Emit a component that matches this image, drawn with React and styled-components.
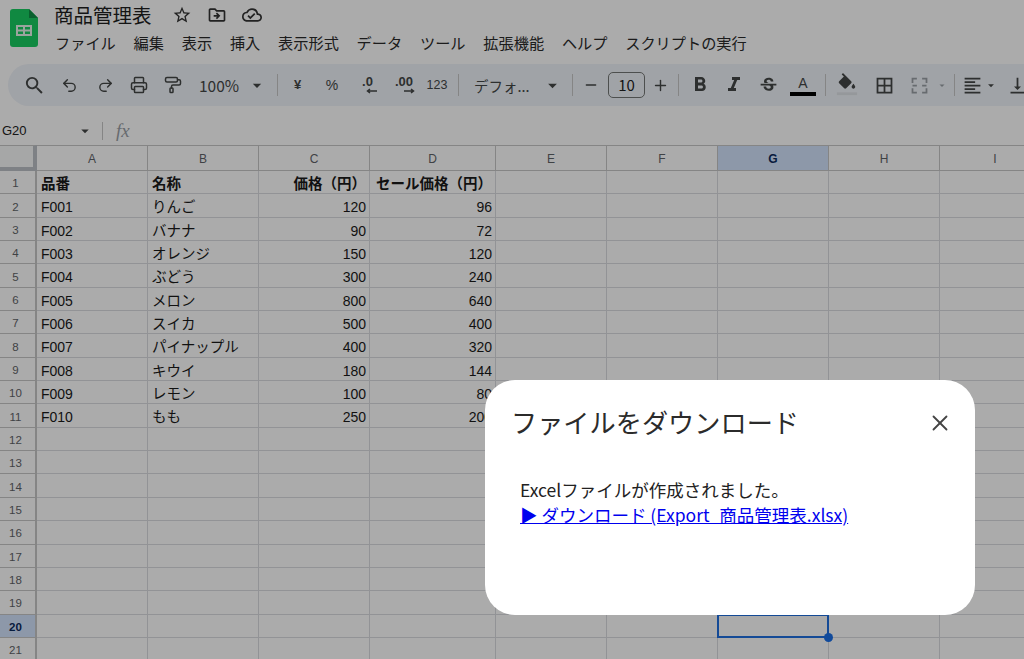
import React from 'react';
import styled, { createGlobalStyle } from 'styled-components';
import { Undo2, Redo2, Printer, PaintRoller, Minus, Plus, X } from 'lucide-react';
import {
  MdSearch,
  MdStarBorder,
  MdOutlineDriveFileMove,
  MdOutlineCloudDone,
  MdArrowDropDown,
  MdFormatBold,
  MdFormatItalic,
  MdStrikethroughS,
  MdBorderAll,
  MdFormatAlignLeft,
  MdVerticalAlignBottom,
} from 'react-icons/md';

const UI_FONT = `'Noto Sans CJK JP', 'Noto Sans', sans-serif`;
const CELL_FONT = `'Liberation Sans', 'Noto Sans CJK JP', sans-serif`;

const GlobalStyle = createGlobalStyle`
  html, body {
    margin: 0;
    padding: 0;
    background: #fff;
  }
  * {
    box-sizing: border-box;
  }
`;

const Page = styled.div`
  position: relative;
  width: 1024px;
  height: 659px;
  overflow: hidden;
  background: #fff;
  color: #1f1f1f;
  font-family: ${UI_FONT};
`;

const Top = styled.header`
  display: flex;
  height: 64px;
  padding: 9px 0 0 10px;
  gap: 17px;
`;

const TitleBlock = styled.div`
  display: flex;
  flex-direction: column;
`;

const TitleRow = styled.div`
  display: flex;
  align-items: center;
  height: 14px;
  margin: -1px 0 0 -1px;
`;

const DocTitle = styled.div`
  font-size: 19.5px;
  line-height: 14px;
  width: 110px;
`;

const TitleIcon = styled.span`
  display: flex;
  justify-content: center;
  width: 35px;
  color: #333;
  font-size: 20px;
`;

const Menu = styled.nav`
  display: flex;
  gap: 17.8px;
  margin-top: 10px;
  font-size: 15.2px;
  line-height: 20px;
  color: #2a2a2a;
`;

const Toolbar = styled.div`
  display: flex;
  align-items: center;
  height: 42px;
  margin: 0 -20px 0 8px;
  padding-left: 9px;
  background: #eff3f9;
  border-radius: 21px;
  color: #444746;
`;

const ToolButton = styled.span`
  display: flex;
  flex: none;
  align-items: center;
  justify-content: center;
  width: ${({ $w }) => $w || 34}px;
  height: 30px;
  color: ${({ $faded }) => ($faded ? '#9aa0a6' : 'inherit')};
  font-size: 21px;
`;

const ToolSep = styled.span`
  flex: none;
  width: 1px;
  height: 22px;
  margin: 0 ${({ $r }) => $r}px 0 ${({ $l }) => $l}px;
  background: #c7c7c7;
`;

const ZoomText = styled.span`
  flex: none;
  width: 58px;
  padding-left: 10px;
  font-size: 15.5px;
`;

const FontName = styled.span`
  flex: none;
  width: 70px;
  padding-left: 6px;
  font-size: 14.5px;
  white-space: nowrap;
`;

const FormatText = styled.span`
  display: flex;
  flex: none;
  flex-direction: column;
  align-items: center;
  justify-content: center;
  width: ${({ $w }) => $w || 35}px;
  font-family: ${CELL_FONT};
  font-size: ${({ $size }) => $size || 13}px;
  font-weight: ${({ $bold }) => ($bold ? 700 : 400)};
  line-height: 12px;
`;

const FormatArrow = styled.svg`
  margin-left: 9px;
`;

const SizeBox = styled.span`
  flex: none;
  width: 37px;
  height: 26px;
  margin-left: 6px;
  border: 1px solid #747775;
  border-radius: 5px;
  font-size: 15px;
  line-height: 24px;
  text-align: center;
  color: #222;
`;

const TextColor = styled.span`
  display: flex;
  flex: none;
  flex-direction: column;
  align-items: center;
  width: 34px;
  font-family: ${CELL_FONT};
  font-size: 14px;
  line-height: 16px;
  &::after {
    content: '';
    width: 26px;
    height: 4px;
    margin-top: 1px;
    background: #000;
  }
`;

const FormulaBar = styled.div`
  display: flex;
  align-items: center;
  height: 39px;
  padding: 10px 0 0 2px;
  color: #444746;
`;

const CellName = styled.span`
  width: 74px;
  font-family: ${CELL_FONT};
  font-size: 13px;
  color: #222;
`;

const FormulaSep = styled.span`
  width: 1px;
  height: 18px;
  margin: 0 13px 0 8px;
  background: #c7c7c7;
`;

const Fx = styled.span`
  font-family: 'Liberation Serif', serif;
  font-size: 19px;
  font-style: italic;
  color: #9aa0a6;
`;

const Sheet = styled.div`
  display: grid;
  grid-template-columns: 37px 111px 111px 111px 126px 111px 111px 111px 111px 111px;
  grid-auto-rows: 23.35px;
  grid-template-rows: 26px;
  width: 1050px;
  font-family: ${CELL_FONT};
`;

const Corner = styled.div`
  background: #f8f9fa;
  border-top: 1px solid #c7c7c7;
  border-right: 4px solid #bdc1c6;
  border-bottom: 4px solid #bdc1c6;
`;

const ColHead = styled.div`
  display: flex;
  align-items: center;
  justify-content: center;
  padding-top: 1px;
  background: ${({ $active }) => ($active ? '#d3e3fd' : '#fff')};
  border-top: 1px solid #c7c7c7;
  border-right: 1px solid #c7c7c7;
  border-bottom: 1px solid #c7c7c7;
  color: ${({ $active }) => ($active ? '#0b2a5c' : '#5f6368')};
  font-size: 12px;
  font-weight: ${({ $active }) => ($active ? 700 : 400)};
`;

const RowHead = styled.div`
  display: flex;
  align-items: center;
  justify-content: center;
  padding: 2px 4px 0 0;
  background: ${({ $active }) => ($active ? '#d3e3fd' : '#fff')};
  border-right: 2px solid #c7c7c7;
  border-bottom: 1px solid #c7c7c7;
  color: ${({ $active }) => ($active ? '#0b2a5c' : '#5f6368')};
  font-size: 11.5px;
  font-weight: ${({ $active }) => ($active ? 700 : 400)};
`;

const Cell = styled.div`
  padding: 1px 3px 0 4px;
  overflow: hidden;
  border-right: 1px solid #dadce0;
  border-bottom: 1px solid #dadce0;
  color: #1a1a1a;
  font-size: ${({ $jp }) => ($jp ? 14.5 : 14)}px;
  font-weight: ${({ $bold }) => ($bold ? 700 : 400)};
  line-height: 24px;
  text-align: ${({ $right }) => ($right ? 'right' : 'left')};
  white-space: nowrap;
`;

const SelectedCell = styled.div`
  position: relative;
  margin: -1px 0 0 -1px;
  border: 2px solid #1f6fe0;
`;

const SelectionHandle = styled.span`
  position: absolute;
  right: -6px;
  bottom: -6px;
  width: 9px;
  height: 9px;
  border-radius: 50%;
  background: #1a6fe8;
`;

const Overlay = styled.div`
  position: absolute;
  inset: 0;
  display: flex;
  align-items: flex-end;
  justify-content: flex-end;
  padding: 0 49px 44px 0;
  background: rgba(0, 0, 0, 0.33);
`;

const Dialog = styled.div`
  display: flex;
  flex-direction: column;
  width: 490px;
  height: 235px;
  padding: 24px 22px 0 27px;
  background: #fff;
  border-radius: 30px;
`;

const DialogHead = styled.div`
  display: flex;
  align-items: center;
  justify-content: space-between;
  height: 36px;
`;

const DialogTitle = styled.h2`
  margin: 0 0 0 -1px;
  font-size: 26.2px;
  font-weight: 400;
  line-height: 36px;
  color: #2b2b2b;
`;

const CloseButton = styled.button`
  display: flex;
  padding: 2px 0 0;
  border: 0;
  background: none;
  color: #444;
`;

const DialogBody = styled.div`
  margin-top: 37px;
  padding-left: 8px;
  font-size: 17.5px;
  line-height: 25px;
  color: #222;
`;

const DownloadLink = styled.a`
  color: #0000ee;
  text-decoration: underline;
`;

const LogoIcon = () => (
  <svg width="28" height="38" viewBox="0 0 28 38" style={{ flex: 'none' }}>
    <path d="M3 0h16l9 9v26a3 3 0 0 1-3 3H3a3 3 0 0 1-3-3V3a3 3 0 0 1 3-3z" fill="#18cc62" />
    <path d="M19 0l9 9h-9z" fill="#0e8f45" />
    <path d="M6 16h16v11H6zM8 18v2.5h5V18zm7 0v2.5h5V18zM8 22.5V25h5v-2.5zm7 0V25h5v-2.5z" fill="#e8f5ec" fillRule="evenodd" />
  </svg>
);

const MergeIcon = () => (
  <svg width="21" height="21" viewBox="0 0 24 24" fill="none" stroke="currentColor" strokeWidth="2">
    <path d="M4 9V4h5M15 4h5v5M4 15v5h5M15 20h5v-5M4 12h5M15 12h5" />
  </svg>
);

const FillIcon = () => (
  <svg width="22" height="24" viewBox="0 0 24 26">
    <path
      d="M16.56 8.94 7.62 0 6.21 1.41l2.38 2.38-5.15 5.15c-.59.59-.59 1.54 0 2.12l5.5 5.5c.29.29.68.44 1.06.44s.77-.15 1.06-.44l5.5-5.5c.59-.58.59-1.53 0-2.11zM19 11.5s-2 2.17-2 3.5c0 1.1.9 2 2 2s2-.9 2-2c0-1.33-2-3.5-2-3.5z"
      fill="currentColor"
    />
    <path d="M1 21h22v3H1z" fill="#dfe3e8" />
  </svg>
);

const ArrowLine = ({ right }) => (
  <FormatArrow width="12" height="6" viewBox="0 0 12 6" fill="none" stroke="currentColor" strokeWidth="1.5">
    {right ? <path d="M1 3h9M8 1l2.500 2L8 5" /> : <path d="M11 3H2M4 1 1.500 3 4 5" />}
  </FormatArrow>
);

const MENU = ['ファイル', '編集', '表示', '挿入', '表示形式', 'データ', 'ツール', '拡張機能', 'ヘルプ', 'スクリプトの実行'];
const COLS = ['A', 'B', 'C', 'D', 'E', 'F', 'G', 'H', 'I'];

const ROWS = [
  ['品番', '名称', '価格（円）', 'セール価格（円）'],
  ['F001', 'りんご', 120, 96],
  ['F002', 'バナナ', 90, 72],
  ['F003', 'オレンジ', 150, 120],
  ['F004', 'ぶどう', 300, 240],
  ['F005', 'メロン', 800, 640],
  ['F006', 'スイカ', 500, 400],
  ['F007', 'パイナップル', 400, 320],
  ['F008', 'キウイ', 180, 144],
  ['F009', 'レモン', 100, 80],
  ['F010', 'もも', 250, 200],
];

const ACTIVE_COL = 6;
const ACTIVE_ROW = 20;

function SheetGrid() {
  const cells = [<Corner key="corner" />];
  COLS.forEach((c, i) => {
    cells.push(<ColHead key={c} $active={i === ACTIVE_COL}>{c}</ColHead>);
  });

  for (let r = 1; r <= 21; r++) {
    cells.push(<RowHead key={`r${r}`} $active={r === ACTIVE_ROW}>{r}</RowHead>);
    const row = ROWS[r - 1] || [];
    COLS.forEach((c, i) => {
      if (r === ACTIVE_ROW && i === ACTIVE_COL) {
        cells.push(
          <SelectedCell key={`${c}${r}`}>
            <SelectionHandle />
          </SelectedCell>
        );
        return;
      }
      cells.push(
        <Cell key={`${c}${r}`} $bold={r === 1} $jp={r === 1 || i === 1} $right={i === 2 || i === 3}>
          {row[i]}
        </Cell>
      );
    });
  }
  return <Sheet>{cells}</Sheet>;
}

export default function App() {
  return (
    <Page>
      <GlobalStyle />
      <Top>
        <LogoIcon />
        <TitleBlock>
          <TitleRow>
            <DocTitle>商品管理表</DocTitle>
            <TitleIcon><MdStarBorder /></TitleIcon>
            <TitleIcon><MdOutlineDriveFileMove /></TitleIcon>
            <TitleIcon><MdOutlineCloudDone /></TitleIcon>
          </TitleRow>
          <Menu>
            {MENU.map(m => <span key={m}>{m}</span>)}
          </Menu>
        </TitleBlock>
      </Top>

      <Toolbar>
        <ToolButton><MdSearch size={23} /></ToolButton>
        <ToolButton $w={37}><Undo2 size={17} /></ToolButton>
        <ToolButton><Redo2 size={17} /></ToolButton>
        <ToolButton><Printer size={18} /></ToolButton>
        <ToolButton $w={33}><PaintRoller size={18} /></ToolButton>
        <ZoomText>100%</ZoomText>
        <ToolButton $w={20}><MdArrowDropDown /></ToolButton>
        <ToolSep $l={10} $r={2} />
        <FormatText $w={35} $bold>¥</FormatText>
        <FormatText $w={34} $size={14}>%</FormatText>
        <FormatText $w={37} $bold>.0<ArrowLine /></FormatText>
        <FormatText $w={36} $bold>.00<ArrowLine right /></FormatText>
        <FormatText $w={30} $size={12.5}>123</FormatText>
        <ToolSep $l={6} $r={9} />
        <FontName>デフォ...</FontName>
        <ToolButton $w={28}><MdArrowDropDown /></ToolButton>
        <ToolSep $l={6} $r={7} />
        <ToolButton $w={22}><Minus size={16} /></ToolButton>
        <SizeBox>10</SizeBox>
        <ToolButton $w={30}><Plus size={17} /></ToolButton>
        <ToolSep $l={3} $r={3} />
        <ToolButton $w={35}><MdFormatBold size={24} /></ToolButton>
        <ToolButton><MdFormatItalic size={24} /></ToolButton>
        <ToolButton $w={35}><MdStrikethroughS size={21} /></ToolButton>
        <TextColor>A</TextColor>
        <ToolSep $l={5} $r={2} />
        <ToolButton $w={38}><FillIcon /></ToolButton>
        <ToolButton $w={36}><MdBorderAll size={21} /></ToolButton>
        <ToolButton $faded><MergeIcon /></ToolButton>
        <ToolButton $w={12} $faded><MdArrowDropDown /></ToolButton>
        <ToolSep $l={6} $r={5} />
        <ToolButton $w={24}><MdFormatAlignLeft size={21} /></ToolButton>
        <ToolButton $w={14}><MdArrowDropDown /></ToolButton>
        <ToolButton $w={38}><MdVerticalAlignBottom size={21} /></ToolButton>
      </Toolbar>

      <FormulaBar>
        <CellName>G20</CellName>
        <MdArrowDropDown size={18} />
        <FormulaSep />
        <Fx>fx</Fx>
      </FormulaBar>

      <SheetGrid />

      <Overlay>
        <Dialog>
          <DialogHead>
            <DialogTitle>ファイルをダウンロード</DialogTitle>
            <CloseButton type="button"><X size={26} strokeWidth={1.7} /></CloseButton>
          </DialogHead>
          <DialogBody>
            <div>Excelファイルが作成されました。</div>
            <DownloadLink href="#">▶ ダウンロード (Export_商品管理表.xlsx)</DownloadLink>
          </DialogBody>
        </Dialog>
      </Overlay>
    </Page>
  );
}
